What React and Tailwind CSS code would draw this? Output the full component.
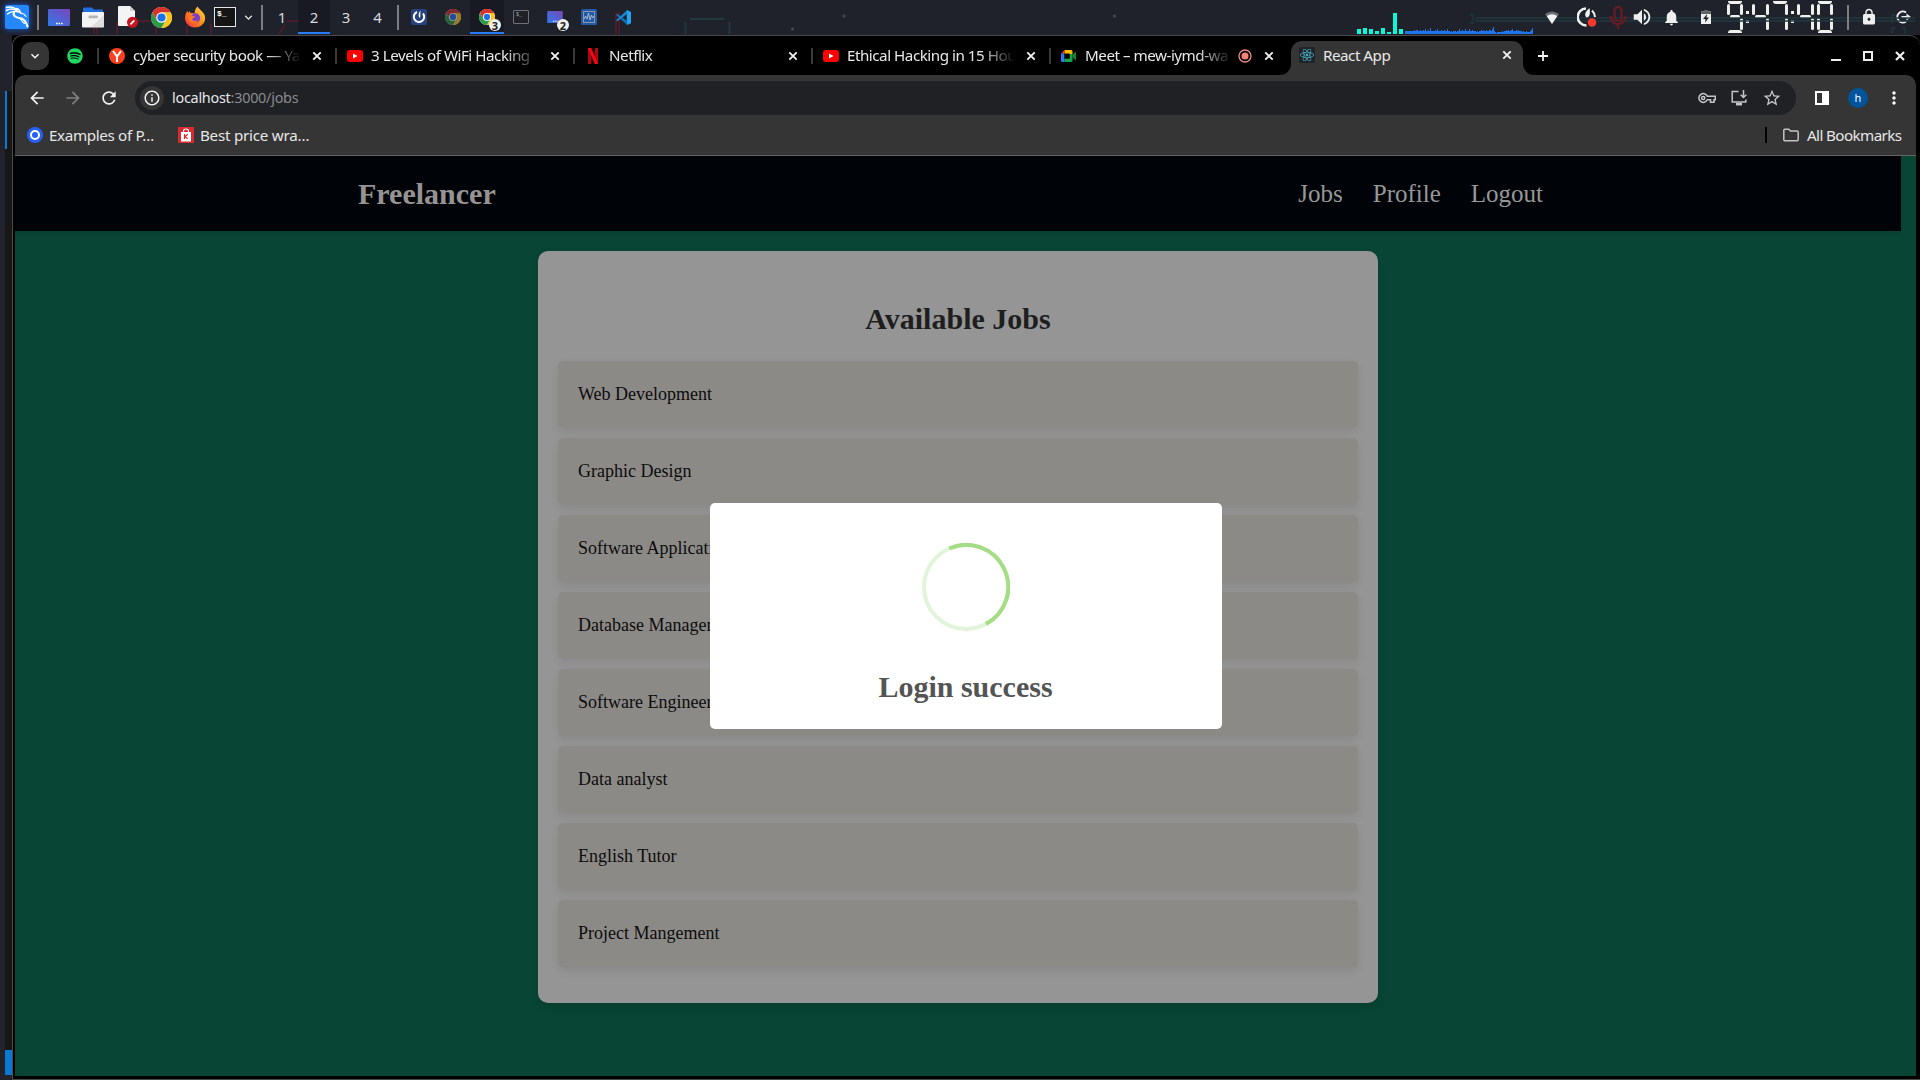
import React from "react";
import { FaSpotify, FaReact } from "react-icons/fa";
import {
  MdArrowBack, MdArrowForward, MdRefresh, MdInfoOutline,
  MdStarOutline, MdMoreVert, MdVolumeUp, MdNotifications, MdLock, MdExpandMore,
} from "react-icons/md";

const UI = "font-['Noto_Sans',sans-serif]";

function Chrome({ size = 20, className = "" }) {
  return (
    <svg width={size} height={size} viewBox="0 0 48 48" className={className}>
      <circle cx="24" cy="24" r="24" fill="#fff" />
      <path d="M3.2 12 A24 24 0 0 0 24 48 L34.4 30 L13.6 30 Z" fill="#2a9c48" />
      <path d="M44.8 12 A24 24 0 0 1 24 48 L34.4 30 L24 12 Z" fill="#fcc419" />
      <path d="M3.2 12 A24 24 0 0 1 44.8 12 L24 12 L13.6 30 Z" fill="#d7332a" />
      <circle cx="24" cy="24" r="12" fill="#fff" />
      <circle cx="24" cy="24" r="9.4" fill="#1a73e8" />
    </svg>
  );
}

function Dragon() {
  return (
    <svg width="24" height="24" viewBox="0 0 24 24" fill="none" stroke="#fff" strokeLinecap="round">
      <path d="M1.500 2.500C5 1.500 9 2 11.500 4.500" strokeWidth="1.400" />
      <path d="M1.500 5.500C5 3.500 9.500 4 12.500 6" strokeWidth="1.600" />
      <path d="M2.500 9C5 6.500 9 6 12 6.500" strokeWidth="1.300" />
      <path d="M11 3.500C13 3.500 14.500 5 15.500 7.500L12 6.500" strokeWidth="1.500" />
      <path d="M9 7C7.500 11 11 12.500 14.500 13C19 13.500 21 16 22.500 21.500" strokeWidth="2.100" />
      <path d="M14 13C17 14.500 17 17.500 19.500 18.500" strokeWidth="1.200" />
      <path d="M15.500 8C18.500 8.500 20 9.500 21 11.500" strokeWidth="1.100" />
    </svg>
  );
}

function Desktop({ w = 22, h = 17 }) {
  return (
    <svg width={w} height={h} viewBox="0 0 22 17">
      <defs>
        <linearGradient id="desk" x1="0" y1="1" x2="1" y2="0">
          <stop offset="0" stopColor="#2f7bea" />
          <stop offset="1" stopColor="#7a45b8" />
        </linearGradient>
      </defs>
      <rect width="22" height="17" rx="1" fill="url(#desk)" />
      <path d="M8 14.5h1.6M10.5 14.5h1.6M13 14.5h1.6" stroke="#fff" strokeWidth="1.4" />
    </svg>
  );
}

function Folder() {
  return (
    <svg width="22" height="21" viewBox="0 0 22 21">
      <path d="M1 1.5a1 1 0 0 1 1-1h8l2 2h8a1 1 0 0 1 1 1V8H1z" fill="#1f6fe0" />
      <rect x="0" y="5" width="22" height="15.5" rx="1" fill="#f3f3f3" />
      <path d="M22 8v12H9z" fill="#dedede" />
      <rect x="6.5" y="8.6" width="9.5" height="2.6" rx="1.3" fill="#b5b5b5" />
    </svg>
  );
}

function Doc() {
  return (
    <svg width="20" height="22" viewBox="0 0 20 22">
      <path d="M0 1a1 1 0 0 1 1-1h11l5 5v14a1 1 0 0 1-1 1H1a1 1 0 0 1-1-1z" fill="#f4f4f4" />
      <path d="M12 0l5 5h-5z" fill="#cfcfcf" />
      <circle cx="14.5" cy="16.3" r="5.5" fill="#c9141e" />
      <path d="M12.5 18.4l3.8-4" stroke="#fff" strokeWidth="1.8" />
    </svg>
  );
}

function Terminal() {
  return (
    <div className="flex h-[20px] w-[22px] items-start border border-[#e6e6e6] bg-[#151515] pl-[2px] pt-[2px] font-['Liberation_Mono',monospace] text-[8px] font-bold leading-[8px] text-white">
      $_
    </div>
  );
}

function Traces() {
  return (
    <svg className="absolute inset-0" width="1920" height="35">
      <g stroke="#5b1c2a" strokeWidth="2" fill="none" opacity="0.75">
        <path d="M94 34v-7M97 34v-7M117 34V23l9-4M137 21h13M156 34V22M187 34v-9M211 34V23M279 34l6-9M287 21h13M305 34V23" />
        <path d="M616 34V12M619 34V12" />
      </g>
      <g stroke="#20393f" strokeWidth="2" fill="none">
        <path d="M690 19h34M685.500 22v12M729.500 22v12" />
        <path d="M1470 15h3v8h-3M1475 18h440M1475 21h440" strokeWidth="1.300" />
        <path d="M1895 15h-3v8M1895 28h-3v6M1902 28h3v6" strokeWidth="1.300" />
      </g>
      <g fill="#494b53">
        <circle cx="792.500" cy="29" r="1.500" />
        <circle cx="844" cy="16" r="1.500" />
        <circle cx="1114.500" cy="16" r="1.500" />
      </g>
    </svg>
  );
}

const CPU = [5, 6, 5, 3, 6, 2, 21, 5];
const NET = [3,3,3,3,3,3,3,3,3,4,3,4,4,3,3,4,3,3,4,3,5,3,3,4,3,6,3,3,3,3,4,3,5,3,3,3,4,3,3,4,3,3,5,3,3,2,3,2,3,3,3,2,3,3,5,3,3,4,3,3,5,3,3,3,5,3,3,4,3,3,3,2,3,2,3,3,4,3,4,3,3,4,3,3,4,4,3,5,7,3,2,1,2,2,2,2,2,3,2,3,3,4,3,4,3,3,4,5,3,3,3,4,3,4,3,3,3,2,3,2,2,3,2,2,2,3,4,6];

function Graphs() {
  return (
    <div className="flex h-[34px] items-end">
      <div className="flex items-end gap-[2px] pr-[2px]">
        {CPU.map((h, i) => <div key={i} className="w-[4px] bg-[#0af7da]" style={{ height: h }} />)}
      </div>
      <div className="flex items-end">
        {NET.map((h, i) => <div key={i} className="w-px bg-[#1f74ec]" style={{ height: h }} />)}
      </div>
    </div>
  );
}

const Sep = () => <div className="h-[25px] w-[2px] bg-[#7d7e83]" />;
function Cell({ w, children, active }) {
  return (
    <div className={"relative flex h-[34px] shrink-0 items-center justify-center " + w + (active ? " bg-[#181923] shadow-[inset_0_-2px_0_#2a7bf6]" : "")}>
      {children}
    </div>
  );
}
const Badge = ({ children }) => (
  <span className={"absolute left-[19px] top-[19px] flex size-[12px] items-center justify-center rounded-full bg-[#f0f0ee] text-[11px] font-bold leading-none text-[#222] " + UI}>{children}</span>
);

const SEGMENTS = { 9: "abcdfg", 4: "bcfg", 7: "abc", 0: "abcdef" };
function Digit({ value }) {
  const on = (s) => (SEGMENTS[value].includes(s) ? "bg-[#efefec]" : "");
  return (
    <div className="flex h-[32px] w-[16.4px] flex-col">
      <div className={"mx-[1px] h-[3px] rounded-b-sm " + on("a")} />
      <div className="flex h-[11px] justify-between">
        <div className={"w-[3px] rounded-sm " + on("f")} />
        <div className={"w-[3px] rounded-sm " + on("b")} />
      </div>
      <div className={"mx-[3px] h-[3px] rounded-sm " + on("g")} />
      <div className="flex h-[12px] justify-between">
        <div className={"w-[3px] rounded-sm " + on("e")} />
        <div className={"w-[3px] rounded-sm " + on("c")} />
      </div>
      <div className={"mx-[1px] h-[3px] rounded-t-sm " + on("d")} />
    </div>
  );
}
const Colon = () => (
  <div className="flex w-[3px] flex-col gap-[6px]">
    <div className="size-[3px] bg-[#efefec]" />
    <div className="size-[3px] bg-[#efefec]" />
  </div>
);

function Panel() {
  return (
    <div className="relative flex h-[35px] items-start bg-[#1f212b]">
      <Traces />
      <Cell w="w-[34px]">
        <div className="flex size-[24px] items-center justify-center rounded-[2px] bg-[#2489ff] shadow-[0_0_6px_#1660d8]">
          <Dragon />
        </div>
      </Cell>
      <Cell w="w-[8px]"><Sep /></Cell>
      <Cell w="w-[34px]"><Desktop /></Cell>
      <Cell w="w-[34px]"><Folder /></Cell>
      <Cell w="w-[35px]"><Doc /></Cell>
      <Cell w="w-[33px]"><Chrome size={21} /></Cell>
      <Cell w="w-[34px]">
        <svg width="22" height="22" viewBox="0 0 22 22">
          <defs><linearGradient id="fox" x1="1" y1="0" x2="0" y2="1"><stop offset="0" stopColor="#ffe14a" /><stop offset=".5" stopColor="#ff8a16" /><stop offset="1" stopColor="#f5224e" /></linearGradient></defs>
          <path d="M13.500 .5c1 2 3 3 4.500 5 2.500 2 3.500 5 3 8.500C20 18.500 16 21.500 11 21.500 5.500 21.500 1 17.500 1 12c0-3 1-5.500 2.500-7l.8 2 1.700-2 .5 2.200c1.500-.5 3-.2 4 .3C10.500 5 11.500 2.500 13.500.5z" fill="url(#fox)" />
          <circle cx="11.500" cy="12" r="4.700" fill="#7b3fc8" />
          <path d="M4 10c2-1.500 4.500 0 7 .2-.6 1.800-2.300 1.800-3 2.800 1 2.500 4 2.500 6 1-2 5-10 4-10-4z" fill="#ff7a1c" />
        </svg>
      </Cell>
      <Cell w="w-[26px]"><Terminal /></Cell>
      <Cell w="w-[20px]"><MdExpandMore size={15} color="#e8e8e8" /></Cell>
      <Cell w="w-[8px]"><Sep /></Cell>
      <div className={"flex text-[15px] text-[#d9dade] " + UI}>
        <Cell w="w-[32px]">1</Cell>
        <Cell w="w-[32px]" active>2</Cell>
        <Cell w="w-[32px]">3</Cell>
        <Cell w="w-[31px]">4</Cell>
      </div>
      <Cell w="w-[9px]"><Sep /></Cell>
      <Cell w="w-[34px]">
        <svg width="16" height="16" viewBox="0 0 16 16">
          <rect width="16" height="16" rx="2" fill="#27427f" />
          <path d="M6 3A5.200 5.200 0 1 0 12 4.500" fill="none" stroke="#fff" strokeWidth="2" />
          <path d="M9.500 1.500L9.200 9C7 8 7 5 9.500 1.500z" fill="#fff" />
        </svg>
      </Cell>
      <Cell w="w-[34px]"><Chrome size={16} className="opacity-55" /></Cell>
      <Cell w="w-[34px]" active><Chrome size={16} /><Badge>3</Badge></Cell>
      <Cell w="w-[34px]">
        <div className="h-[14px] w-[16px] rounded-[1px] border border-[#6f7075] bg-[#202126] pl-[2px] pt-[2px] font-['Liberation_Mono',monospace] text-[5px] leading-[5px] text-[#aaa]">$_</div>
      </Cell>
      <Cell w="w-[34px]"><Desktop w={16} h={12} /><Badge>2</Badge></Cell>
      <Cell w="w-[34px]">
        <svg width="16" height="16" viewBox="0 0 16 16">
          <rect width="16" height="16" rx="1.500" fill="#2459a3" />
          <rect x="2.500" y="2.500" width="11" height="11" fill="none" stroke="#8798b0" />
          <path d="M3 10l1.500-3 1.500 3 1.500-6 1.500 7 1.500-5 1 3 1.500-2" fill="none" stroke="#a9b9cd" />
        </svg>
      </Cell>
      <Cell w="w-[34px]">
        <svg width="15" height="15" viewBox="0 0 16 16">
          <path d="M11.500 0L16 2v12l-4.500 2z" fill="#25a5f0" />
          <path d="M0 5l1.500-1L12 12v4z" fill="#0b75c0" />
          <path d="M0 11l1.500 1L12 4V0z" fill="#1489d2" />
        </svg>
      </Cell>
      <div className="w-[717px] shrink-0" />
      <Graphs />
      <div className="flex-1" />
      <Cell w="w-[34px]">
        <svg width="14" height="13" viewBox="0 0 14 13">
          <path d="M0 3Q7-2 14 3L7 13z" fill="#6d6f75" />
          <path d="M1.800 5Q7 1.500 12.200 5L7 13z" fill="#f2f2f2" />
        </svg>
      </Cell>
      <Cell w="w-[36px]">
        <svg width="20" height="20" viewBox="0 0 20 20">
          <path d="M9 1.500A8.500 8.500 0 0 0 9.500 18.500" fill="none" stroke="#f2f2f2" strokeWidth="2.500" />
          <path d="M12.500 1C8 5 7 8 9.500 10.500 12.500 10.500 13.500 7 12.500 1z" fill="#f2f2f2" />
          <path d="M15 3.500c2 2 3 4 3 6.500" fill="none" stroke="#f2f2f2" strokeWidth="2" />
          <circle cx="15" cy="15.500" r="4.300" fill="#f6382d" />
        </svg>
      </Cell>
      <Cell w="w-[26px]">
        <svg width="18" height="25" viewBox="0 0 18 25" fill="none" stroke="#611c24" strokeWidth="2.500">
          <rect x="5.500" y="2" width="7" height="14" rx="3.500" /><path d="M1.500 11c0 11 15 11 15 0M9 19v5" />
        </svg>
      </Cell>
      <Cell w="w-[22px]"><MdVolumeUp size={22} color="#eee" /></Cell>
      <Cell w="w-[36px]"><MdNotifications size={19} color="#eee" /></Cell>
      <Cell w="w-[34px]">
        <svg width="10" height="14" viewBox="0 0 10 14"><path d="M3 0h4v1.500h3V14H0V1.500h3z" fill="#efefef" /><path d="M0 1.500h3V0h4v1.500h3V4H0z" fill="#62646a" /><path d="M6 4L2 9h2.500L4 12.500 8 7.500H5.500z" fill="#1f212b" /></svg>
      </Cell>
      <div className="flex h-[34px] w-[114px] shrink-0 items-center gap-[3px] pl-[4px]" aria-label="9:47:40">
        <Digit value={9} /><Colon /><Digit value={4} /><Digit value={7} /><Colon /><Digit value={4} /><Digit value={0} />
      </div>
      <Cell w="w-[22px]"><Sep /></Cell>
      <Cell w="w-[20px]"><MdLock size={18} color="#eee" /></Cell>
      <div className="flex h-[34px] w-[41px] shrink-0 items-center pl-[17px]">
        <svg width="16" height="14" viewBox="0 0 16 14" fill="none" stroke="#eee" strokeWidth="2">
          <path d="M10 2.500A5.500 5.500 0 1 0 10 11.500" /><path d="M5.500 7H12" /><path d="M10.500 3.500L15 7 10.500 10.500z" fill="#eee" stroke="none" />
        </svg>
      </div>
    </div>
  );
}

const YouTube = () => (
  <svg width="16" height="12" viewBox="0 0 16 12"><rect width="16" height="12" rx="3" fill="#f00" /><path d="M6 3.500v5L10.500 6z" fill="#fff" /></svg>
);
const NetflixMark = () => (
  <svg width="10" height="16" viewBox="0 0 10 16"><path d="M0 0h3.300v16H0zM6.700 0H10v16H6.700z" fill="#b0060f" /><path d="M0 0h3.300L10 16H6.700z" fill="#f00a16" /></svg>
);
const Meet = () => (
  <svg width="16" height="14" viewBox="0 0 16 14">
    <path d="M3.500 1H10a1.500 1.500 0 0 1 1.500 1.500V5H3.500z" fill="#fbbc04" /><path d="M0 4.500L3.500 1v3.500z" fill="#ea4335" />
    <path d="M0 4.500h3.500v8.500h-2A1.500 1.500 0 0 1 0 11.500z" fill="#2a7cf6" /><path d="M3.500 9.500h5V5h3v6.500A1.500 1.500 0 0 1 10 13H3.500z" fill="#17a34a" />
    <path d="M3.500 4.500h5v5h-5z" fill="#000" /><path d="M11.500 5.500L15 2.500v9l-3.500-3z" fill="#188038" />
  </svg>
);
const Recording = () => (
  <svg width="16" height="16" viewBox="0 0 16 16"><circle cx="8" cy="8" r="6" fill="none" stroke="#f08a80" strokeWidth="1.300" /><circle cx="8" cy="8" r="3.500" fill="#f4837a" /></svg>
);
const CloseX = () => (
  <svg width="16" height="16" viewBox="0 0 16 16"><path d="M4.300 4.300l7.400 7.400M11.700 4.300l-7.400 7.400" stroke="#f1f1f1" strokeWidth="1.900" /></svg>
);

const TABS = [
  { icon: <div className="flex size-4 items-center justify-center rounded-full bg-[#fc3f1d]"><svg width="10" height="12" viewBox="0 0 10 12"><path d="M1 1l4 5.500L9 1M5 6v6" fill="none" stroke="#fff" strokeWidth="2" /></svg></div>, text: "cyber security book — Ya" },
  { icon: <YouTube />, text: "3 Levels of WiFi Hacking" },
  { icon: <NetflixMark />, text: "Netflix" },
  { icon: <YouTube />, text: "Ethical Hacking in 15 Hou" },
  { icon: <Meet />, text: "Meet – mew-iymd-wa", rec: true },
];

function Tab({ icon, text, rec }) {
  return (
    <div className="flex h-[39px] w-[238px] shrink-0 items-center">
      <div className="h-4 w-[2px] bg-[#3a3a3a]" />
      <div className="ml-[10px] flex size-4 items-center justify-center">{icon}</div>
      <div className={"ml-2 whitespace-nowrap [mask-image:linear-gradient(to_right,black_calc(100%-34px),transparent)] " + (rec ? "w-[147px]" : "w-[168px]")}>{text}</div>
      {rec && <div className="ml-[5px]"><Recording /></div>}
      <div className="ml-2"><CloseX /></div>
    </div>
  );
}

function TabStrip() {
  return (
    <div className={"flex h-[39px] items-center pl-[9px] text-[15.2px] tracking-[-0.48px] text-[#e8e8e8] " + UI}>
      <div className="flex size-[28px] items-center justify-center rounded-[10px] bg-[#353535]"><MdExpandMore size={16} color="#fff" /></div>
      <div className="ml-[18px] mr-[14px]"><FaSpotify size={16} color="#1ed760" /></div>
      {TABS.map((t) => <Tab key={t.text} {...t} />)}
      <div className="relative ml-[4px] mt-[5px] flex h-[34px] w-[232px] items-center rounded-t-[11px] bg-[#353535] pb-[6px] pl-2 pr-2">
        <svg className="absolute -left-[11px] bottom-0" width="11" height="11"><path d="M11 0V11H0A11 11 0 0 0 11 0" fill="#353535" /></svg>
        <svg className="absolute -right-[11px] bottom-0" width="11" height="11"><path d="M0 0V11H11A11 11 0 0 1 0 0" fill="#353535" /></svg>
        <div className="flex size-4 items-center justify-center rounded-[2px] bg-[#202428]"><FaReact size={14} color="#4cb4cf" /></div>
        <div className="ml-2 flex-1 whitespace-nowrap">React App</div>
        <CloseX />
      </div>
      <svg className="ml-[12px]" width="16" height="16"><path d="M8 3v10M3 8h10" stroke="#f1f1f1" strokeWidth="1.800" /></svg>
      <div className="flex-1" />
      <div className="flex items-center gap-[22px] pr-[15px]">
        <svg width="10" height="10"><path d="M0 9h10" stroke="#eee" strokeWidth="2" /></svg>
        <div className="size-[10px] border-2 border-[#eee]" />
        <svg width="10" height="10"><path d="M1 1l8 8M9 1l-8 8" stroke="#eee" strokeWidth="2.200" /></svg>
      </div>
    </div>
  );
}

function Toolbar() {
  return (
    <div className="flex h-[46px] items-center text-white">
      <div className="ml-[12px] flex gap-4">
        <MdArrowBack size={20} color="#f2f2f2" />
        <MdArrowForward size={20} color="#808080" />
        <MdRefresh size={20} color="#f2f2f2" />
      </div>
      <div className="ml-[16px] flex h-[34px] w-[1661px] items-center rounded-full bg-[#202124]">
        <div className="ml-[5px] flex size-[24px] items-center justify-center rounded-full bg-[#353535]"><MdInfoOutline size={18} color="#f2f2f2" /></div>
        <div className={"ml-[8px] flex-1 text-[14.4px] tracking-[-0.25px] text-[#8a8b8e] " + UI}><span className="text-[#e6e7e9]">localhost</span>:3000/jobs</div>
        <div className="mr-[14px] flex items-center gap-[14px] text-[#c4c5c7]">
          <svg width="18" height="12" viewBox="0 0 18 12" fill="none" stroke="currentColor" strokeWidth="1.500"><path d="M9.300 4.200H17.300V7.800H16V10.200H12.500V7.800H9.300A4.400 4.400 0 1 1 9.300 4.200z" /><circle cx="5.200" cy="6" r="1.600" /></svg>
          <svg width="18" height="18" viewBox="0 0 18 18" fill="none" stroke="currentColor" strokeWidth="1.500"><path d="M8.500 2.500H2.200V13h13.600v-2.500" /><path d="M6 15.200h6" strokeWidth="2.500" /><path d="M13.500 1v7M10.700 5.700L13.500 8.500l2.800-2.800" /></svg>
          <MdStarOutline size={20} />
        </div>
      </div>
      <div className="ml-[19px] flex h-[14px] w-[14px] border-2 border-white"><div className="flex-1" /><div className="w-[5px] bg-white" /></div>
      <div className={"ml-[19px] flex size-[20px] items-center justify-center rounded-full bg-[#00549c] text-[11px] " + UI}>h</div>
      <div className="ml-[16px]"><MdMoreVert size={20} /></div>
    </div>
  );
}

function Bookmarks() {
  return (
    <div className={"flex h-[34px] items-center pb-[6px] text-[15.2px] text-[#e6e6e6] " + UI}>
      <div className="ml-[12px] flex size-4 items-center justify-center rounded-full bg-[#2660f5]"><div className="size-[10px] rounded-full border-2 border-white" /></div>
      <div className="ml-[6px] w-[129px] whitespace-nowrap tracking-[-0.35px]">Examples of P…</div>
      <svg width="16" height="16" viewBox="0 0 16 16"><rect width="16" height="16" fill="#d92b2f" /><path d="M3 5h10v9.500H3z" fill="#fff" /><path d="M5.500 5.500V4a2.500 2 0 0 1 5 0v1.500" fill="none" stroke="#fff" strokeWidth="1.200" /><path d="M6.500 7v5M9.800 7.200L7 9.500l2.800 2.400" stroke="#d92b2f" strokeWidth="1.200" fill="none" /></svg>
      <div className="ml-[6px] flex-1 whitespace-nowrap tracking-[-0.25px]">Best price wra…</div>
      <div className="h-4 w-[2px] bg-black" />
      <svg className="ml-[16px]" width="16" height="14" viewBox="0 0 16 14"><path d="M.8 2.300a1 1 0 0 1 1-1h4L7.500 3h6.700a1 1 0 0 1 1 1v7.700a1 1 0 0 1-1 1H1.800a1 1 0 0 1-1-1z" fill="none" stroke="#c4c4c4" strokeWidth="1.500" /></svg>
      <div className="ml-[8px] w-[109px] whitespace-nowrap tracking-[-0.6px]">All Bookmarks</div>
    </div>
  );
}

const JOBS = ["Web Development", "Graphic Design", "Software Application", "Database Management", "Software Engineering", "Data analyst", "English Tutor", "Project Mangement"];

function Page() {
  return (
    <div className="relative h-[920px] overflow-hidden bg-[#084534] font-['Liberation_Serif',serif]">
      <div className="flex h-[75px] w-[1886px] items-center justify-between bg-[#000408] pl-[343px] pr-[358px] shadow-[0_2px_4px_rgba(0,0,0,0.1)]">
        <div className="text-[30px] font-bold text-[#979393]">Freelancer</div>
        <div className="flex gap-[30px] text-[25px] text-[#979797]"><span>Jobs</span><span>Profile</span><span>Logout</span></div>
      </div>
      <div className="ml-[523px] mt-[20px] flex h-[752px] w-[840px] flex-col rounded-[10px] bg-[#959595] px-5 shadow-[0_4px_8px_rgba(0,0,0,0.1)]">
        <h1 className="mt-[51px] h-[34px] text-center text-[30px] font-bold leading-[34px] text-[#1e1e1e]">Available Jobs</h1>
        <ul className="mt-[25px] flex flex-col gap-[10px]">
          {JOBS.map((j) => (
            <li key={j} className="h-[67px] rounded-[5px] bg-[#8c8a87] p-5 text-[18px] leading-[27px] text-[#0c0c0c] shadow-[0_4px_8px_rgba(0,0,0,0.08)]">{j}</li>
          ))}
        </ul>
      </div>
      <div className="absolute left-[695px] top-[347px] flex h-[226px] w-[512px] flex-col items-center rounded-[5px] bg-white">
        <svg className="mt-[40px]" width="88" height="88" viewBox="0 0 88 88" fill="none" strokeWidth="4">
          <circle cx="44" cy="44" r="42" stroke="#e2f4da" />
          <path d="M27.300 5.500A42 42 0 0 1 64 81" stroke="#a5dc86" />
        </svg>
        <h2 className="mt-[36px] pr-px text-[30px] font-bold leading-[40px] text-[#545454]">Login success</h2>
      </div>
    </div>
  );
}

export default function App() {
  return (
    <div className="h-[1080px] w-[1920px] overflow-hidden bg-black">
      <Panel />
      <div className="flex h-[1045px]">
        <div className="flex w-[12px] flex-col bg-[#22222c] pl-[5px]">
          <div className="h-[56px]" />
          <div className="h-[58px] bg-[#171717]"><div className="h-full w-[2px] bg-[#0b78d4]" /></div>
          <div className="h-[901px] bg-[#171717]" />
          <div className="h-[25px] bg-[#0b78d4]" />
        </div>
        <div className="flex w-[1908px] flex-col rounded-t-[10px] border-y border-l border-[#4a4a4a] bg-black pl-[2px] pr-[4px]">
          <div className="-ml-[3px] -mr-[4px]"><TabStrip /></div>
          <div className="flex h-[81px] flex-col rounded-t-[10px] border-b border-[#636363] bg-[#353535]">
            <Toolbar />
            <Bookmarks />
          </div>
          <Page />
        </div>
      </div>
    </div>
  );
}
